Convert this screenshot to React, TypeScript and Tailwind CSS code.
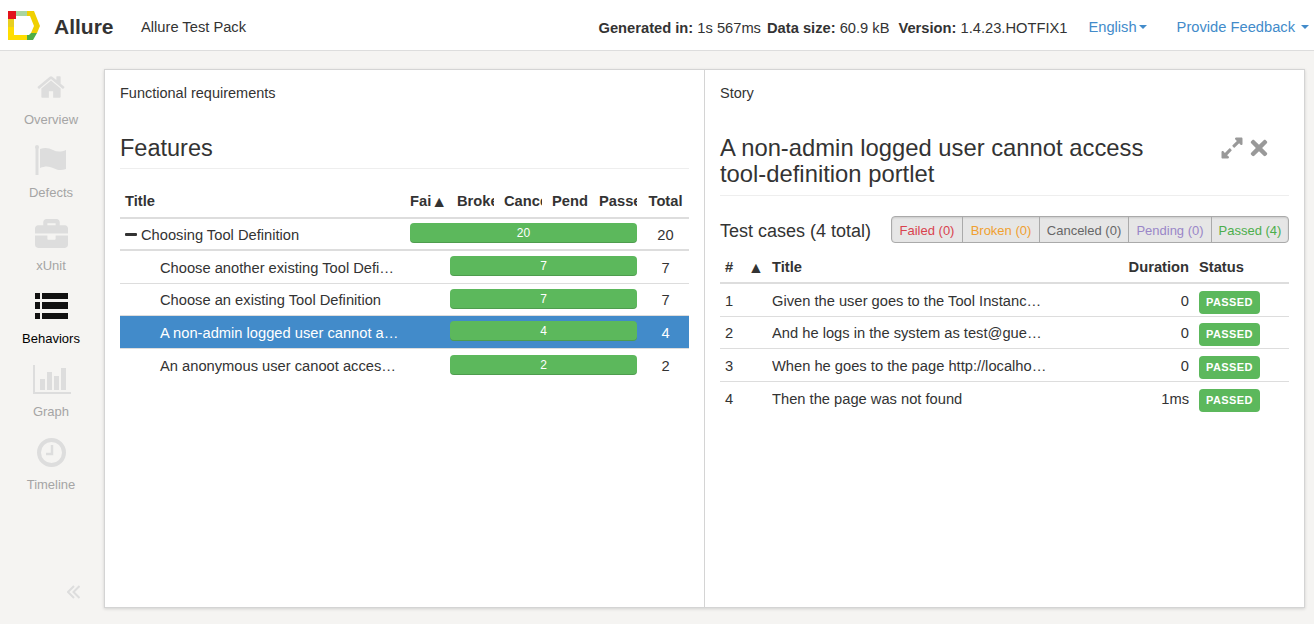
import { FaBriefcase, FaExpandAlt, FaTimes } from 'react-icons/fa';

function Logo() {
  return (
    <svg width="33" height="30" viewBox="0 0 33 30" className="mb-[3px] shrink-0">
      <polygon points="0,0 8,0 8,8 0,8" fill="#e2131b" />
      <polygon points="8,0 19,0 19,5 8,5" fill="#a9d5a0" />
      <polygon points="19,0 26,0 32,15 26,15 22,5 19,5" fill="#f0d000" />
      <polygon points="26,15 32,15 29,22 23,22" fill="#f0d000" />
      <polygon points="23,22 29,22 25,29 19,29 19,24 21,24" fill="#4fae45" />
      <polygon points="0,24 19,24 19,29 0,29" fill="#ffdd00" />
      <polygon points="0,8 6,8 6,16 0,16" fill="#e8cf20" />
      <polygon points="0,16 6,16 6,24 0,24" fill="#ffdd00" />
    </svg>
  );
}

function HomeIcon() {
  return (
    <svg width="30" height="30" viewBox="0 0 1792 1792" fill="currentColor">
      <path d="M1472 992v480q0 26-19 45t-45 19h-384v-384h-256v384h-384q-26 0-45-19t-19-45v-480q0-1 .5-3t.5-3l575-474 575 474q1 2 1 6zm223-69l-62 74q-8 9-21 11h-3q-13 0-21-7l-692-577-692 577q-12 8-24 7-13-2-21-11l-62-74q-8-10-7-23.500t11-21.500l719-599q32-26 76-26t76 26l244 204v-195q0-14 9-23t23-9h192q14 0 23 9t9 23v408l219 182q10 8 11 21.500t-7 23.500z" />
    </svg>
  );
}

function FlagIcon() {
  return (
    <svg width="33" height="30" viewBox="0 0 33 30" fill="currentColor" className="ml-[1px]">
      <circle cx="2" cy="2" r="2" />
      <rect x="0.5" y="2" width="3" height="28" />
      <path d="M5 4c5-2 9-1 13 1s8 2 13 0v19c-5 2-9 1-13-1s-8-2-13 0z" />
    </svg>
  );
}

function ListIcon() {
  return (
    <svg width="33" height="26" viewBox="0 0 33 26" fill="currentColor">
      <rect x="0" y="0" width="5" height="6" />
      <rect x="7" y="0" width="26" height="6" />
      <rect x="0" y="9" width="5" height="7" />
      <rect x="7" y="9" width="26" height="7" />
      <rect x="0" y="20" width="5" height="6" />
      <rect x="7" y="20" width="26" height="6" />
    </svg>
  );
}

function GraphIcon() {
  return (
    <svg width="38" height="29" viewBox="0 0 38 29" fill="currentColor" className="ml-[1px]">
      <rect x="0" y="0" width="2" height="29" />
      <rect x="0" y="27" width="38" height="2" />
      <rect x="7" y="14" width="5" height="11" />
      <rect x="14" y="7" width="5" height="18" />
      <rect x="21" y="11" width="5" height="14" />
      <rect x="28" y="3" width="5" height="22" />
    </svg>
  );
}

function ClockIcon() {
  return (
    <svg width="29" height="29" viewBox="0 0 29 29" fill="none" stroke="currentColor">
      <circle cx="14.500" cy="14.500" r="12.500" strokeWidth="4" />
      <path d="M15 7v9h-6" strokeWidth="2.500" />
    </svg>
  );
}

function CollapseIcon() {
  return (
    <svg width="13" height="14" viewBox="0 0 13 14" fill="none" stroke="currentColor" strokeWidth="2">
      <path d="M7 1 1 7l6 6M12.500 1l-6 6 6 6" />
    </svg>
  );
}

const navItems = [
  { label: 'Overview', icon: <HomeIcon /> },
  { label: 'Defects', icon: <FlagIcon /> },
  { label: 'xUnit', icon: <FaBriefcase size={33} /> },
  { label: 'Behaviors', icon: <ListIcon />, active: true },
  { label: 'Graph', icon: <GraphIcon /> },
  { label: 'Timeline', icon: <ClockIcon /> },
];

const features = [
  { title: 'Choose another existing Tool Definition', passed: 7, rowClass: 'h-[33px] border-b border-[#dddddd]' },
  { title: 'Choose an existing Tool Definition', passed: 7, rowClass: 'h-[32px] border-b border-[#dddddd]' },
  { title: 'A non-admin logged user cannot access tool-definition portlet', passed: 4, rowClass: 'h-[33px] border-b border-[#dddddd] bg-[#428bca] text-white' },
  { title: 'An anonymous user canoot access tool-definition portlet', passed: 2, rowClass: 'h-[33px]' },
];

const filters = [
  { label: 'Failed (0)', color: 'text-[#d9434e]', width: 'w-[70px]' },
  { label: 'Broken (0)', color: 'text-[#f0a030]', width: 'w-[77px]' },
  { label: 'Canceled (0)', color: 'text-[#666666]', width: 'w-[89px]' },
  { label: 'Pending (0)', color: 'text-[#9a86c8]', width: 'w-[83px]' },
  { label: 'Passed (4)', color: 'text-[#4cae4c]', width: 'flex-1' },
];

const testCases = [
  { id: 1, title: 'Given the user goes to the Tool Instance page and more', duration: '0' },
  { id: 2, title: 'And he logs in the system as test@guest.example.com now', duration: '0' },
  { id: 3, title: 'When he goes to the page http://localhost:8080/web/guest', duration: '0' },
  { id: 4, title: 'Then the page was not found', duration: '1ms' },
];

function Bar({ value }: { value: number }) {
  return (
    <div className="mb-[2px] h-5 flex-1 rounded bg-[#5cb85c] text-center text-xs leading-[21px] text-white shadow-[inset_0_-1px_0_rgba(0,0,0,0.15)]">
      {value}
    </div>
  );
}

export default function App() {
  return (
    <div className="flex h-[624px] flex-col overflow-hidden bg-[#f5f4f2] font-['Liberation_Sans',sans-serif] text-[14.7px] text-[#333333]">
      {/* Header */}
      <div className="flex h-[51px] shrink-0 items-center border-b border-[#dddddd] bg-white pl-2 pr-[5px] pt-1">
        <Logo />
        <span className="ml-[13px] w-[87px] text-[21px] font-bold">Allure</span>
        <span>Allure Test Pack</span>
        <div className="ml-auto flex items-center">
          <span className="pt-[2px]"><b>Generated in:</b> 1s 567ms</span>
          <span className="ml-[6px] pt-[2px]"><b>Data size:</b> 60.9 kB</span>
          <span className="ml-[9px] pt-[2px]"><b>Version:</b> 1.4.23.HOTFIX1</span>
          <span className="ml-[21px] text-[#428bca]">English</span>
          <span className="ml-[2px] h-0 w-0 border-x-4 border-t-4 border-x-transparent border-t-[#428bca]" />
          <span className="ml-[30px] text-[#428bca]">Provide Feedback</span>
          <span className="ml-[6px] h-0 w-0 border-x-4 border-t-4 border-x-transparent border-t-[#428bca]" />
        </div>
      </div>

      <div className="flex min-h-0 flex-1">
        {/* Sidebar */}
        <div className="flex w-[104px] shrink-0 flex-col items-center pb-[25px] pr-[2px] pt-[13px] text-[13px]">
          {navItems.map(item => (
            <div
              key={item.label}
              className={`flex h-[73px] w-full flex-col items-center ${item.active ? 'text-black' : 'text-[#a5a5a5]'}`}
            >
              <div className={`flex h-[46px] items-center ${item.active ? 'text-[#111111]' : 'text-[#dddddd]'}`}>
                {item.icon}
              </div>
              <div>{item.label}</div>
            </div>
          ))}
          <div className="mt-auto self-end pr-[22px] text-[#dddddd]">
            <CollapseIcon />
          </div>
        </div>

        {/* Panels */}
        <div className="mb-[16px] mr-[9px] mt-[18px] flex flex-1 border border-[#d4d4d4] bg-white shadow-[0_1px_3px_rgba(0,0,0,0.15)]">
          {/* Features */}
          <div className="w-[600px] shrink-0 border-r border-[#d4d4d4] pl-[15px] pr-[15px]">
            <div className="pt-[13px] text-[14.5px] leading-5">Functional requirements</div>
            <div className="mt-[32px] h-[34px] border-b border-[#eeeeee] text-[23.500px] leading-[26px]">Features</div>

            <div className="mt-[17px] flex h-[33px] items-center border-b-2 border-[#dddddd] font-bold">
              <div className="w-[285px] pl-[5px]">Title</div>
              <div className="flex w-[47px] items-center overflow-hidden pl-[5px]">Fai<span className="text-[16px]">▲</span></div>
              <div className="w-[47px] pl-[5px]"><div className="w-[37px] overflow-hidden">Broken</div></div>
              <div className="w-[48px] pl-[5px]"><div className="w-[38px] overflow-hidden">Canceled</div></div>
              <div className="w-[47px] pl-[5px]"><div className="w-[36px] overflow-hidden">Pending</div></div>
              <div className="w-[48px] pl-[5px]"><div className="w-[38px] overflow-hidden">Passed</div></div>
              <div className="flex-1 text-center">Total</div>
            </div>

            <div className="flex h-[32px] items-center border-b-2 border-[#dddddd]">
              <div className="flex w-[290px] items-center pl-[5px] pt-[2px]">
                <span className="mr-1 h-[3px] w-3 rounded-[1px] bg-[#333333]" />
                Choosing Tool Definition
              </div>
              <Bar value={20} />
              <div className="w-[52px] pl-[5px] pt-[2px] text-center">20</div>
            </div>

            {features.map(row => (
              <div key={row.title} className={`flex items-center ${row.rowClass}`}>
                <div className="w-[280px] truncate pl-[40px] pt-[2px]">{row.title}</div>
                <div className="ml-[50px] flex w-[187px]"><Bar value={row.passed} /></div>
                <div className="flex-1 pl-[5px] pt-[2px] text-center">{row.passed}</div>
              </div>
            ))}
          </div>

          {/* Story */}
          <div className="min-w-0 flex-1 pl-[15px] pr-[15px]">
            <div className="pt-[13px] text-[14.5px] leading-5">Story</div>
            <div className="mt-[32px] flex h-[61px] items-start justify-between border-b border-[#eeeeee] pb-2">
              <div className="w-[470px] text-[23.800px] leading-[26px]">A non-admin logged user cannot access tool-definition portlet</div>
              <div className="mr-[18px] flex h-[26px] items-center gap-[3px] text-[#999999]">
                <FaExpandAlt size={24} />
                <FaTimes size={24} />
              </div>
            </div>

            <div className="mt-[20px] flex h-[27px] items-center justify-between">
              <span className="pt-[3px] text-lg">Test cases (4 total)</span>
              <div className="flex h-[27px] w-[398px] overflow-hidden rounded border border-[#aaaaaa] bg-[#e6e6e6] text-[13px] shadow-[inset_0_1px_2px_rgba(0,0,0,0.12)]">
                {filters.map((f, i) => (
                  <div
                    key={f.label}
                    className={`flex items-center justify-center pt-[2px] ${f.width} ${f.color} ${i > 0 ? 'border-l border-[#aaaaaa]' : ''}`}
                  >
                    {f.label}
                  </div>
                ))}
              </div>
            </div>

            <div className="mt-[8px] flex h-[33px] items-center border-b-2 border-[#dddddd] pt-[2px] font-bold">
              <div className="w-[28px] pl-[5px]">#</div>
              <div className="w-[24px] text-[16px]">▲</div>
              <div className="flex-1">Title</div>
              <div className="w-[80px] text-right">Duration</div>
              <div className="w-[100px] pl-[10px]">Status</div>
            </div>

            {testCases.map(test => (
              <div key={test.id} className="flex h-[32.500px] items-center border-b border-[#dddddd] last:border-b-0">
                <div className="w-[52px] pl-[5px] pt-[2px]">{test.id}</div>
                <div className="w-[276px] truncate pt-[2px]">{test.title}</div>
                <div className="flex-1 pt-[2px] text-right">{test.duration}</div>
                <div className="w-[100px] pl-[10px] pt-[5px]">
                  <span className="block h-[23px] w-[61px] rounded bg-[#5cb85c] text-center text-[11px] font-bold leading-[23px] tracking-[0.4px] text-white">PASSED</span>
                </div>
              </div>
            ))}
          </div>
        </div>
      </div>
    </div>
  );
}
